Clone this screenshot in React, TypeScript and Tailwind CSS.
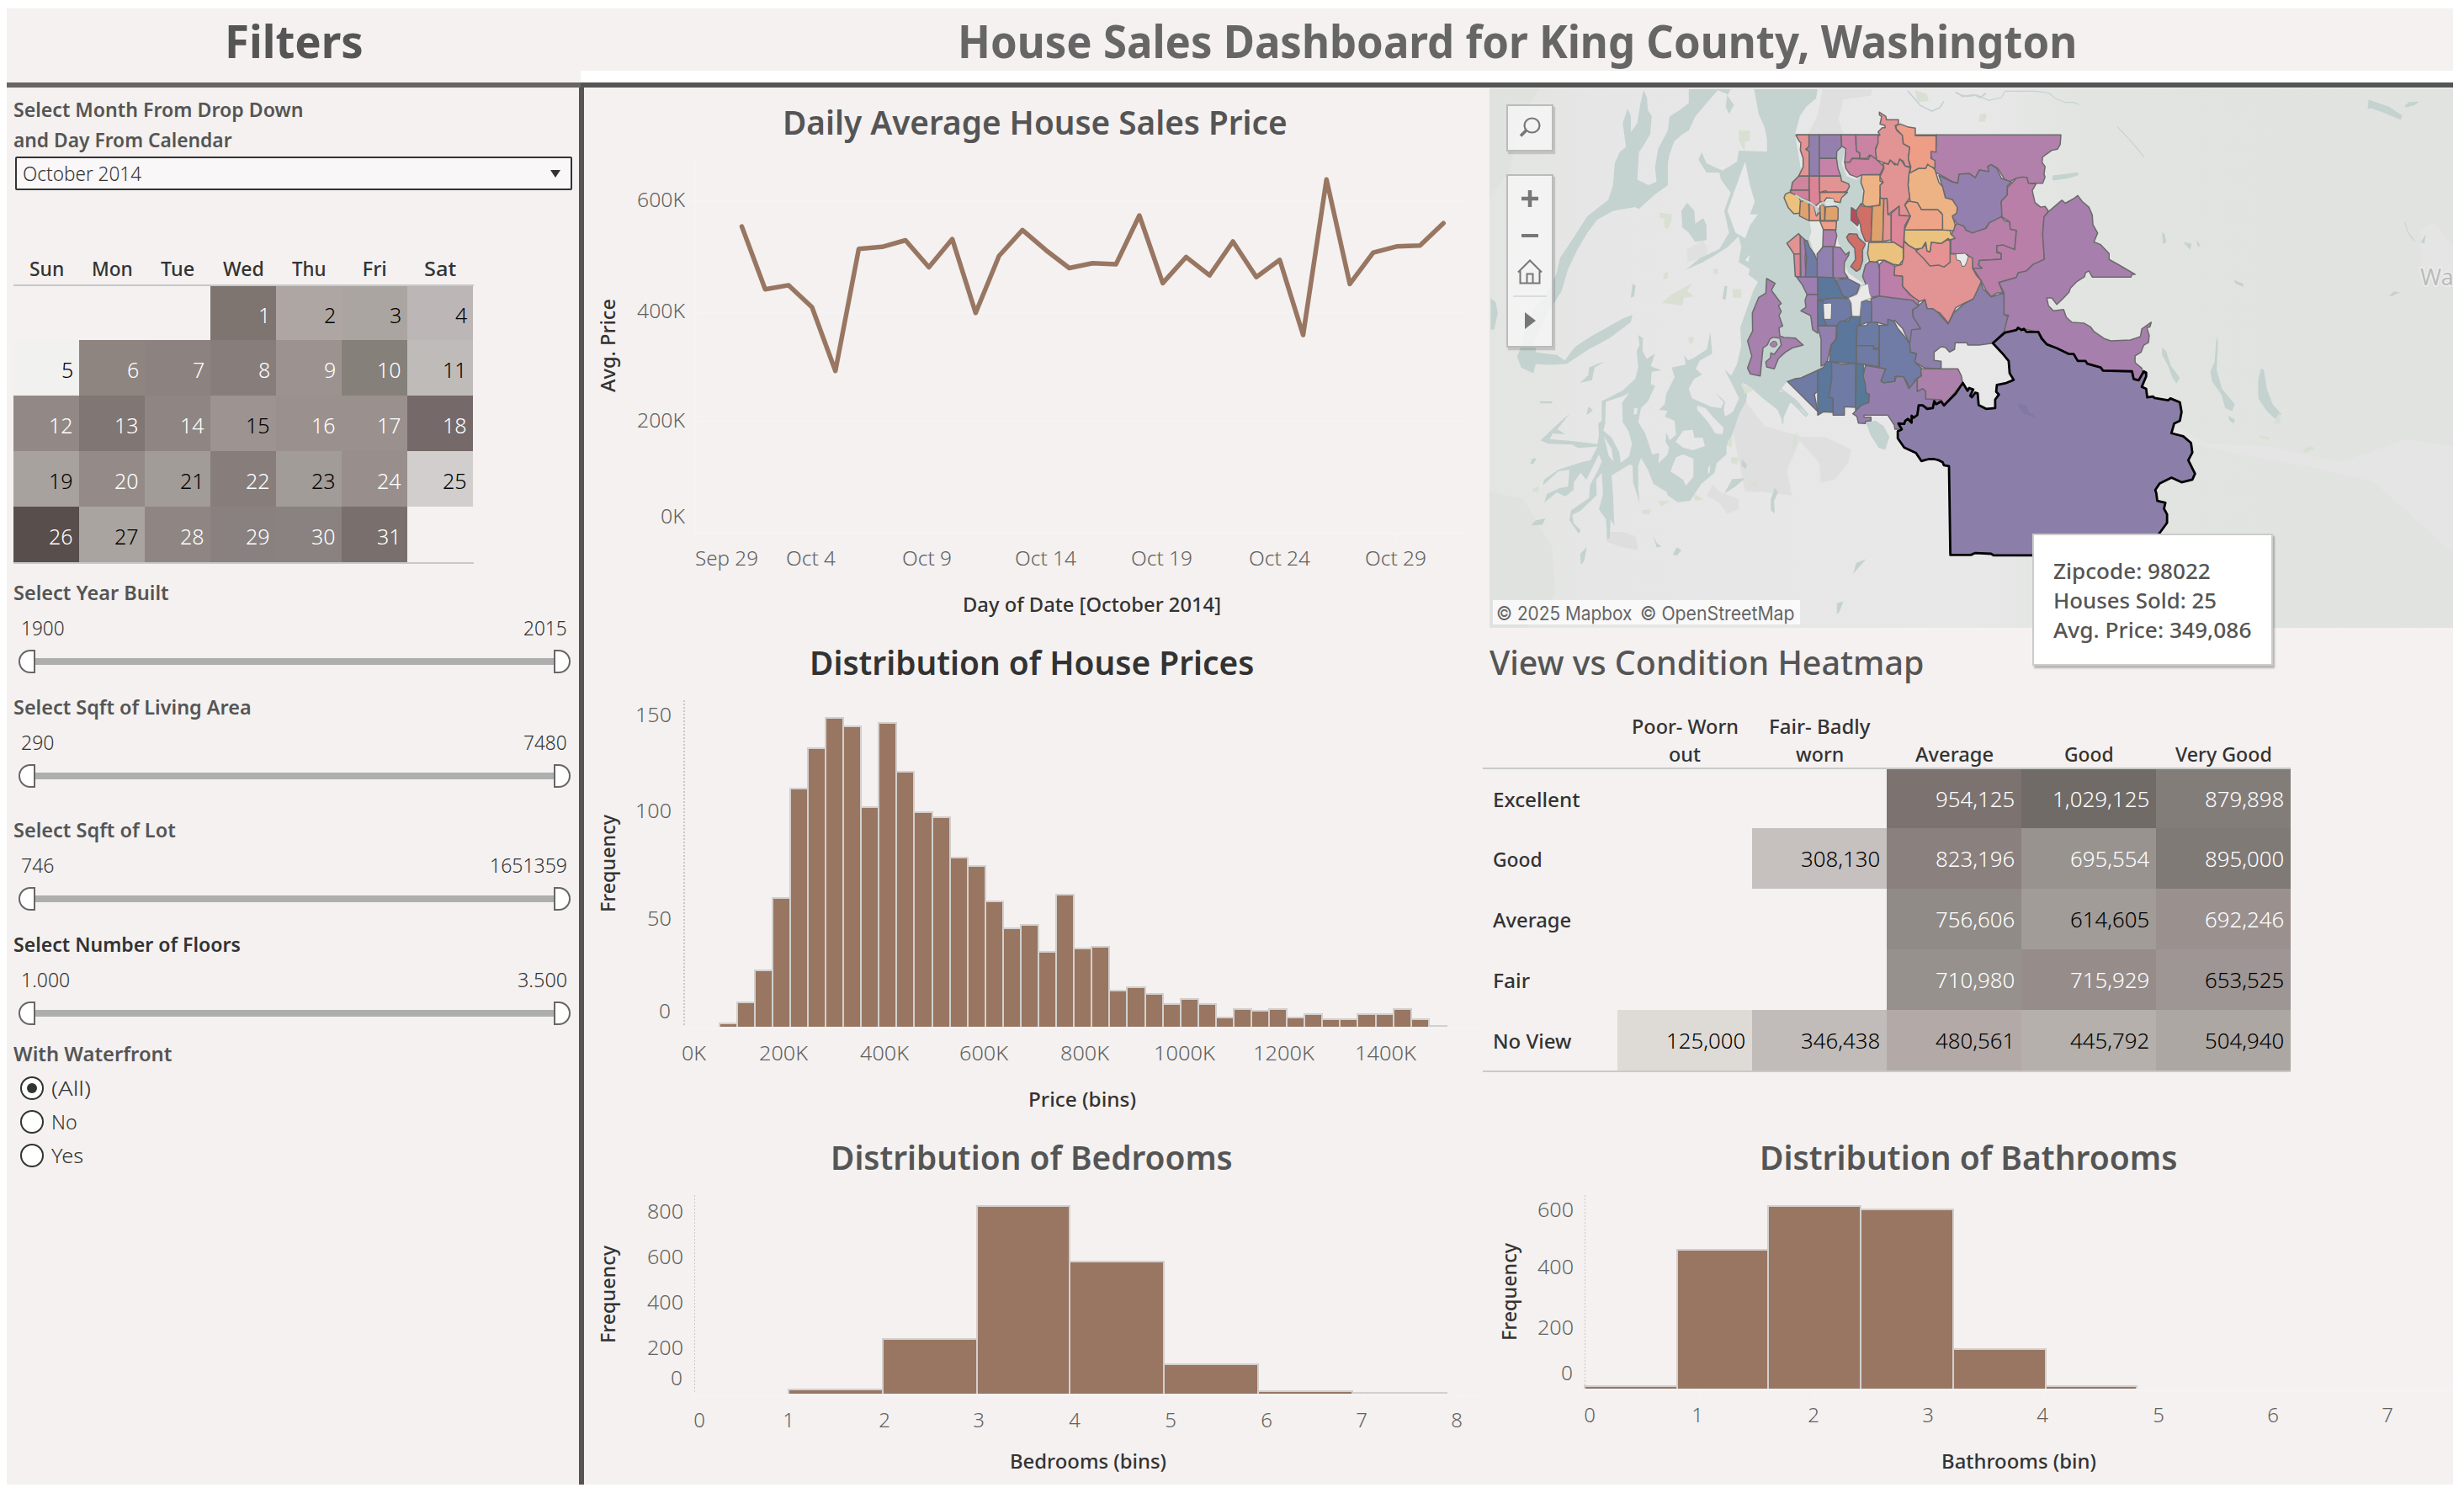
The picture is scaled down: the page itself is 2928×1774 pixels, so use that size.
import { useLayoutEffect, useRef, useState } from "react";
import type { ReactNode } from "react";

/** Single line of text fitted horizontally to a fixed width. */
function Fit({ w, className = "", children }: { w: number; className?: string; children: ReactNode }) {
  const ref = useRef<HTMLSpanElement>(null);
  const [k, setK] = useState(1);
  useLayoutEffect(() => {
    if (ref.current) setK(w / ref.current.offsetWidth);
  }, [w]);
  return (
    <span className={`block shrink-0 ${className}`} style={{ width: w }}>
      <span ref={ref} className="inline-block origin-left whitespace-pre" style={{ transform: `scaleX(${k})` }}>
        {children}
      </span>
    </span>
  );
}

/* ------------------------------------------------------------------ */
/* Chart text helpers                                                   */
/* ------------------------------------------------------------------ */

function Tick({ x, y, w, children }: { x: number; y: number; w: number; children: string }) {
  return (
    <text x={x} y={y} textLength={w} lengthAdjust="spacingAndGlyphs" className="fill-[#616161] text-[24px] font-[350]">
      {children}
    </text>
  );
}

function Digit({ x, y, children }: { x: number; y: number; children: number }) {
  return (
    <text x={x} y={y} textAnchor="middle" className="fill-[#616161] text-[24px] font-[350]">
      {children}
    </text>
  );
}

function AxisTitle({ x, y, w, children }: { x: number; y: number; w: number; children: string }) {
  return (
    <text x={x} y={y} textLength={w} lengthAdjust="spacingAndGlyphs" className="fill-[#333] text-[23px] font-medium">
      {children}
    </text>
  );
}

function SideTitle({ x, y, w, children }: { x: number; y: number; w: number; children: string }) {
  return (
    <text
      transform={`translate(${x} ${y}) rotate(-90)`}
      textLength={w}
      lengthAdjust="spacingAndGlyphs"
      className="fill-[#333] text-[24px] font-medium"
    >
      {children}
    </text>
  );
}

function Bars({ edges, tops, base }: { edges: number[]; tops: number[]; base: number }) {
  return (
    <g shapeRendering="crispEdges">
      {tops.map((t, i) => {
        const x0 = Math.round(edges[i]);
        const x1 = Math.round(edges[i + 1]);
        const top = Math.round(t);
        return (
          <g key={i}>
            <rect x={x0} y={top} width={x1 - x0 + 2} height={base - top} className="fill-[#d2d0cf]" />
            <rect x={x0 + 2} y={top + 2} width={x1 - x0 - 2} height={Math.max(0, base - top - 2)} className="fill-[#987662]" />
          </g>
        );
      })}
    </g>
  );
}

function PanelTitle({ w, className, children }: { w: number; className: string; children: string }) {
  return (
    <h2 className={`flex items-center text-[40px] leading-none ${className}`}>
      <Fit w={w}>{children}</Fit>
    </h2>
  );
}

/* ------------------------------------------------------------------ */
/* Filters                                                              */
/* ------------------------------------------------------------------ */

const DAYS: [string, number][] = [["Sun", 41], ["Mon", 49], ["Tue", 40], ["Wed", 49], ["Thu", 41], ["Fri", 29], ["Sat", 38]];

type Cell = [number, string, boolean] | null;
const WEEKS: Cell[][] = [
  [null, null, null, [1, "#7e7470", false], [2, "#aea6a3", true], [3, "#aaa5a1", true], [4, "#bcb7b6", true]],
  [[5, "#f1f1f0", true], [6, "#8e8581", false], [7, "#8c8380", false], [8, "#877e7c", false], [9, "#9c9391", false], [10, "#85807a", false], [11, "#bfbbb9", true]],
  [[12, "#928986", false], [13, "#807673", false], [14, "#8f8683", false], [15, "#9d9491", true], [16, "#9a918e", false], [17, "#9a918e", false], [18, "#756a69", false]],
  [[19, "#a7a29e", true], [20, "#948b88", false], [21, "#a19c98", true], [22, "#877e7b", false], [23, "#a19c98", true], [24, "#988f8c", false], [25, "#d2cecd", true]],
  [[26, "#584e4c", false], [27, "#a9a4a0", true], [28, "#8f8683", false], [29, "#898180", false], [30, "#8a8280", false], [31, "#79706d", false], null],
];

function Calendar() {
  return (
    <div className="ml-2 w-[547px] border-b-2 border-[#c8c8c8]">
      <div className="flex h-[42px] border-b-2 border-[#c8c8c8] text-[24px] font-medium leading-[41px] text-[#333]">
        {DAYS.map(([d, w]) => (
          <div key={d} className="flex w-[78px] justify-center">
            <Fit w={w}>{d}</Fit>
          </div>
        ))}
      </div>
      {WEEKS.map((week, r) => (
        <div key={r} className={r === 0 ? "flex h-16" : "flex h-[66px]"}>
          {week.map((c, i) => (
            <div
              key={i}
              className={`flex w-[78px] items-center justify-end pr-[7px] pt-[5px] text-[25px] font-[350] ${c && c[2] ? "text-black" : "text-white"}`}
              style={{ backgroundColor: c ? c[1] : undefined }}
            >
              {c && <Fit w={c[0] > 9 ? 29 : 14}>{c[0]}</Fit>}
            </div>
          ))}
        </div>
      ))}
    </div>
  );
}

function Range({ label, lw, lo, low, hi, hiw, className = "" }: {
  label: string; lw: number; lo: string; low: number; hi: string; hiw: number; className?: string;
}) {
  return (
    <div className={`flex flex-col ${className}`}>
      <Fit w={lw} className="ml-2 text-[23.5px] font-semibold leading-9">{label}</Fit>
      <div className="mt-2 flex h-8 justify-between pl-[17px] pr-[14px] text-[23px] font-[350] leading-8 text-[#333]">
        <Fit w={low}>{lo}</Fit>
        <Fit w={hiw}>{hi}</Fit>
      </div>
      <div className="ml-[14px] mt-2.5 flex h-7 w-[656px] items-center">
        <div className="h-7 w-5 rounded-l-[14px] border-2 border-[#666] bg-white" />
        <div className="h-2 flex-1 bg-[#aeaeae]" />
        <div className="h-7 w-5 rounded-r-[14px] border-2 border-[#666] bg-white" />
      </div>
    </div>
  );
}

function Radio({ label, w, on = false }: { label: string; w: number; on?: boolean }) {
  return (
    <div className="flex h-10 items-center gap-[9px] pl-4 text-[24px] font-[350] text-[#333]">
      <span className="flex size-7 items-center justify-center rounded-full border-2 border-[#333] bg-white">
        {on && <span className="size-3 rounded-full bg-[#333]" />}
      </span>
      <Fit w={w}>{label}</Fit>
    </div>
  );
}

function Filters() {
  return (
    <aside className="flex w-[680px] shrink-0 flex-col text-[#555]">
      <div className="ml-2 mt-2 text-[24px] font-semibold leading-9">
        <Fit w={344}>Select Month From Drop Down</Fit>
        <Fit w={260}>and Day From Calendar</Fit>
      </div>
      <div className="ml-[10px] mt-0.5 flex h-10 w-[662px] items-center justify-between rounded-xs border-2 border-[#333] bg-[#f9f7f8] pl-[7px] pr-[12px] text-[23px] font-[350] text-[#333]">
        <Fit w={141}>October 2014</Fit>
        <svg viewBox="0 0 12 9" className="h-[9px] w-3"><path d="M0 0h12L6 9z" fill="#333" /></svg>
      </div>
      <div className="h-[72px]" />
      <Calendar />
      <Range label="Select Year Built" lw={185} lo="1900" low={52} hi="2015" hiw={52} className="mt-4" />
      <Range label="Select Sqft of Living Area" lw={283} lo="290" low={39} hi="7480" hiw={52} className="mt-[22px]" />
      <Range label="Select Sqft of Lot" lw={193} lo="746" low={39} hi="1651359" hiw={92} className="mt-8" />
      <Range label="Select Number of Floors" lw={270} lo="1.000" low={58} hi="3.500" hiw={59} className="mt-[22px] text-[#333]" />
      <Fit w={188} className="ml-2 mt-4 text-[23.5px] font-semibold leading-9">With Waterfront</Fit>
      <div className="mt-[3px]">
        <Radio label="(All)" w={47} on />
        <Radio label="No" w={31} />
        <Radio label="Yes" w={38} />
      </div>
    </aside>
  );
}

/* ------------------------------------------------------------------ */
/* Charts                                                               */
/* ------------------------------------------------------------------ */

const DAILY = [553, 707, 697, 751, 907, 608, 603, 587, 653, 584, 765, 625, 562, 611, 655, 643, 646, 526, 692, 628, 673, 590, 677, 635, 819, 438, 694, 617, 602, 600, 545];

function LineChart() {
  const pts = DAILY.map((v, i) => `${(881.5 + i * 27.79).toFixed(1)},${(v / 2.063 + 1).toFixed(1)}`).join(" ");
  return (
    <svg viewBox="694 185 1068 559" className="block h-[559px] w-[1068px]">
      <path d="M826.500 190V641M818 238.500H1742M818 371H1742M818 501H1742M818 633H1742M964.500 633v8M1103.500 633v8M1242.500 633v8M1381.500 633v8M1520.500 633v8M1659 633v8" fill="none" stroke="#f3f4f3" strokeWidth="2" />
      <Tick x={757} y={246} w={57}>600K</Tick>
      <Tick x={757} y={378} w={57}>400K</Tick>
      <Tick x={757} y={507.500} w={57}>200K</Tick>
      <Tick x={785} y={622} w={29}>0K</Tick>
      <Tick x={826} y={672} w={75}>Sep 29</Tick>
      <Tick x={934} y={672} w={59}>Oct 4</Tick>
      <Tick x={1072} y={672} w={59}>Oct 9</Tick>
      <Tick x={1206} y={672} w={73}>Oct 14</Tick>
      <Tick x={1344} y={672} w={73}>Oct 19</Tick>
      <Tick x={1484} y={672} w={73}>Oct 24</Tick>
      <Tick x={1622} y={672} w={73}>Oct 29</Tick>
      <AxisTitle x={1144} y={727} w={307}>Day of Date [October 2014]</AxisTitle>
      <SideTitle x={731} y={466} w={111}>Avg. Price</SideTitle>
      <polyline points={pts} fill="none" stroke="#987662" strokeWidth="5.500" strokeLinejoin="round" strokeLinecap="round" />
    </svg>
  );
}

const PRICE_TOPS = [1240, 1177, 1077, 852, 512, 387, 293, 320, 570, 309, 460, 585, 601, 727, 753, 862, 946, 936, 1019, 841, 1009, 1004, 1139, 1129, 1150, 1181, 1166, 1181, 1223, 1197, 1203, 1197, 1223, 1213, 1228, 1228, 1213, 1213, 1197, 1228, 1249];

function PriceHistogram() {
  return (
    <svg viewBox="694 829 1068 501" className="block h-[501px] w-[1068px]">
      <path d="M812 1222H1762M812 1222v8M930 1222v8M1050 1222v8M1169 1222v8M1288 1222v8M1408 1222v8M1527 1222v8M1646 1222v8" fill="none" stroke="#f3f4f3" strokeWidth="2" />
      <path d="M813 832V1220" stroke="#cbc7c6" strokeWidth="2" strokeDasharray="2 2" />
      <Bars edges={PRICE_TOPS.map((_, i) => 853.6 + i * 21.08).concat(1718)} tops={PRICE_TOPS.map((t) => 740 + t / 2.613)} base={1220} />
      <Tick x={755} y={858} w={43}>150</Tick>
      <Tick x={755} y={972} w={43}>100</Tick>
      <Tick x={769} y={1100} w={29}>50</Tick>
      <Tick x={783} y={1210} w={14}>0</Tick>
      <Tick x={810} y={1260} w={29}>0K</Tick>
      <Tick x={902} y={1260} w={58}>200K</Tick>
      <Tick x={1022} y={1260} w={58}>400K</Tick>
      <Tick x={1140} y={1260} w={58}>600K</Tick>
      <Tick x={1260} y={1260} w={58}>800K</Tick>
      <Tick x={1371} y={1260} w={73}>1000K</Tick>
      <Tick x={1489} y={1260} w={73}>1200K</Tick>
      <Tick x={1610} y={1260} w={73}>1400K</Tick>
      <AxisTitle x={1222} y={1315} w={128}>Price (bins)</AxisTitle>
      <SideTitle x={731} y={1084} w={116}>Frequency</SideTitle>
    </svg>
  );
}

function BedroomHistogram() {
  return (
    <svg viewBox="694 1419 1068 345" className="block h-[345px] w-[1068px]">
      <path d="M820 1658H1762M825 1658v8M939 1658v8M1052 1658v8M1164 1658v8M1279 1658v8M1392 1658v8M1507 1658v8M1621 1658v8M1733 1658v8" fill="none" stroke="#f3f4f3" strokeWidth="2" />
      <path d="M825.500 1420V1656" stroke="#cbc7c6" strokeWidth="1" strokeDasharray="2 2" />
      <Bars edges={[936, 1048, 1160, 1270, 1382, 1494, 1606, 1718]} tops={[1650, 1590, 1432, 1498, 1620, 1652, 1654]} base={1656} />
      <Tick x={769} y={1448} w={43}>800</Tick>
      <Tick x={769} y={1502} w={43}>600</Tick>
      <Tick x={769} y={1556} w={43}>400</Tick>
      <Tick x={769} y={1610} w={43}>200</Tick>
      <Tick x={797} y={1646} w={14}>0</Tick>
      {[831, 937, 1051, 1163, 1277, 1391, 1505, 1618, 1731].map((x, i) => (
        <Digit key={i} x={x} y={1696}>{i}</Digit>
      ))}
      <AxisTitle x={1200} y={1745} w={186}>Bedrooms (bins)</AxisTitle>
      <SideTitle x={731} y={1596} w={116}>Frequency</SideTitle>
    </svg>
  );
}

function BathroomHistogram() {
  return (
    <svg viewBox="1762 1419 1153 345" className="block h-[345px] w-[1153px]">
      <path d="M1884 1652H2915M1884 1652v8M2019 1652v8M2156 1652v8M2293 1652v8M2429 1652v8M2567 1652v8M2703 1652v8M2839 1652v8" fill="none" stroke="#f3f4f3" strokeWidth="2" />
      <path d="M1883.500 1420V1650" stroke="#cbc7c6" strokeWidth="1" strokeDasharray="2 2" />
      <Bars edges={[1882, 1992, 2100, 2210, 2320, 2430, 2538]} tops={[1646, 1484, 1432, 1436, 1602, 1646]} base={1650} />
      <Tick x={1827} y={1446} w={43}>600</Tick>
      <Tick x={1827} y={1514} w={43}>400</Tick>
      <Tick x={1827} y={1586} w={43}>200</Tick>
      <Tick x={1855} y={1640} w={14}>0</Tick>
      {[1889, 2017, 2155, 2291, 2427, 2565, 2701, 2837].map((x, i) => (
        <Digit key={i} x={x} y={1690}>{i}</Digit>
      ))}
      <AxisTitle x={2307} y={1745} w={184}>Bathrooms (bin)</AxisTitle>
      <SideTitle x={1802} y={1593} w={116}>Frequency</SideTitle>
    </svg>
  );
}

/* ------------------------------------------------------------------ */
/* Heatmap                                                              */
/* ------------------------------------------------------------------ */

type Heat = [string, string, boolean] | null;
const HEAT: { label: string; w: number; cells: Heat[] }[] = [
  { label: "Excellent", w: 103, cells: [null, null, ["954,125", "#7c7270", false], ["1,029,125", "#706b67", false], ["879,898", "#837d7a", false]] },
  { label: "Good", w: 59, cells: [null, ["308,130", "#c6c1be", true], ["823,196", "#8a807e", false], ["695,554", "#98938f", false], ["895,000", "#807a76", false]] },
  { label: "Average", w: 93, cells: [null, null, ["756,606", "#908b86", false], ["614,605", "#a19c98", true], ["692,246", "#9a918f", false]] },
  { label: "Fair", w: 44, cells: [null, null, ["710,980", "#96918c", false], ["715,929", "#968d8a", false], ["653,525", "#9e9694", true]] },
  { label: "No View", w: 93, cells: [["125,000", "#dedad5", true], ["346,438", "#c1bcb9", true], ["480,561", "#b3aaa7", true], ["445,792", "#b5b0ac", true], ["504,940", "#aca7a3", true]] },
];

const HEAT_COLS: [string, number][][] = [
  [["Poor- Worn", 127], ["out", 38]],
  [["Fair- Badly", 120], ["worn", 57]],
  [["Average", 93]],
  [["Good", 59]],
  [["Very Good", 115]],
];

function Heatmap() {
  return (
    <div className="mb-14 w-[960px] border-b-2 border-[#c8cac8] text-[24px]">
      <div className="flex h-[87px] items-end border-b-2 border-[#c8cac8] pl-40 font-medium leading-[33px] text-[#333]">
        {HEAT_COLS.map((lines, i) => (
          <div key={i} className="flex w-40 flex-col items-center">
            {lines.map(([t, w]) => <Fit key={t} w={w}>{t}</Fit>)}
          </div>
        ))}
      </div>
      {HEAT.map((row, r) => (
        <div key={row.label} className={r === 0 ? "flex h-[70px]" : "flex h-[72px]"}>
          <div className="flex w-40 items-center pl-[12px] pt-px font-medium text-[#333]">
            <Fit w={row.w}>{row.label}</Fit>
          </div>
          {row.cells.map((c, i) => (
            <div
              key={i}
              className={`flex w-40 items-center justify-end pr-[8px] pt-0.5 text-[25px] font-[350] ${c && c[2] ? "text-black" : "text-white"}`}
              style={{ backgroundColor: c ? c[1] : undefined }}
            >
              {c && <Fit w={c[0].length > 7 ? 115 : 94}>{c[0]}</Fit>}
            </div>
          ))}
        </div>
      ))}
    </div>
  );
}

/* ------------------------------------------------------------------ */
/* Map                                                                  */
/* ------------------------------------------------------------------ */

const PINK = "#e29393", MAG = "#c983a6", ROSE = "#bb7fa9", PLUM = "#ac80ae", PUR = "#8c7faa";
const IND = "#6f7ba4", BLUE = "#5b779b", ORG = "#eeb384", DORG = "#e0a26c", SAL = "#ee9d87", YEL = "#eac27d", RED = "#d06f66";

type Shape = [string, string];

const EAST: Shape[] = [
  ["#b180ab", "2,153 372,153 370,178 362,190 345,193 318,210 316,224 325,235 322,255 325,262 318,278 275,278 272,264 240,265 218,275 205,268 185,240 165,230 155,235 158,248 130,244 118,264 100,253 70,255 66,278 50,274 12,255 -2,250 -4,236 -14,205 -14,190 2,180"],
  ["#9480ae", "10,258 50,275 66,278 70,255 100,253 118,264 130,244 158,248 155,235 165,230 182,240 195,265 225,275 213,285 213,308 195,325 198,360 185,375 160,380 148,395 125,402 110,407 90,400 82,388 65,385 58,375 45,365 65,345 50,320 30,318 20,285"],
  ["#b87fa8", "55,390 65,383 85,390 90,400 110,407 125,402 150,395 160,380 195,365 205,375 220,378 222,397 240,400 235,450 200,438 182,440 182,458 195,460 195,475 130,478 128,490 138,498 110,498 110,480 98,478 95,463 45,460 45,420"],
  ["#b97fa8", "240,265 260,262 272,264 275,278 298,280 287,297 295,328 312,340 325,338 335,350 322,365 318,410 323,475 290,488 270,505 245,510 240,522 205,530 188,535 200,562 182,562 165,572 150,555 135,530 120,510 110,498 138,498 128,490 130,478 195,475 195,460 182,455 182,440 200,438 235,450 240,400 222,397 220,378 197,365 195,325 213,308 213,290"],
  ["#a77fac", "335,352 375,322 385,330 410,318 422,310 435,325 455,340 465,360 467,385 481,407 470,430 490,437 515,460 515,475 545,490 592,514 583,514 580,521 465,521 455,505 445,510 442,520 420,532 400,550 396,560 380,575 360,592 345,575 330,575 335,595 350,608 380,605 388,625 405,638 440,640 460,650 470,662 500,680 520,686 578,684 608,675 612,655 640,638 636,650 627,652 634,672 632,690 618,697 610,715 592,725 592,742 612,757 615,768 600,788 588,785 583,765 497,763 450,745 420,735 395,720 330,695 305,663 262,655 205,665 205,640 217,620 203,618 203,562 188,535 240,522 245,510 270,505 290,488 323,475 318,410 322,365"],
];

const NORTH: Shape[] = [
  [PINK, "636,500 655,515 680,530 802,495 802,545 855,545 882,560 882,596 895,620 912,640 910,681 894,702 850,722 822,737 796,792 765,755 740,745 720,740 712,708 688,716 660,690 632,660 632,625 603,622 600,590 630,583 635,560"],
  ["#e69292", "680,535 690,528 712,515 715,505 720,535 730,538 735,503 770,508 795,492 802,500 802,575 780,592 762,585 730,588 708,562"],
  [YEL, "638,460 802,460 805,475 820,490 800,495 795,490 770,508 735,503 730,538 720,535 715,503 702,525 678,528 655,515 638,498"],
  [ORG, "655,257 690,240 715,240 722,225 735,232 748,245 762,290 775,305 785,345 810,352 828,380 825,400 810,410 820,440 815,462 775,460 775,425 772,400 758,388 700,388 685,362 660,360 652,300"],
  ["#eea587", "655,357 685,362 700,388 758,388 775,405 775,458 638,460 660,412 640,370"],
  [PINK, "562,220 582,225 590,210 605,228 625,207 642,232 660,238 655,262 652,300 658,345 640,370 660,410 620,408 620,375 580,405 577,350 552,345 552,300 563,290 552,270 566,240"],
  [MAG, "413,121 466,121 466,155 470,180 480,185 480,205 452,205 445,218 426,218 430,170 415,160"],
  ["#c984a4", "466,121 549,121 545,150 536,170 540,205 522,205 515,193 505,205 480,205 480,185 468,178"],
  ["#cc82a0", "426,218 445,218 452,205 510,208 518,193 540,208 566,235 552,262 487,263 470,272 445,262 430,240"],
  [PINK, "550,40 573,55 575,67 618,67 618,82 606,88 612,105 632,122 635,152 658,165 653,205 660,235 642,232 635,215 622,207 615,228 600,220 588,210 582,225 560,218 540,210 536,175 545,150 545,125 552,122 545,110 560,95 570,95 570,88 552,82 558,55 550,50"],
  [SAL, "609,88 625,82 650,92 678,97 678,124 752,124 752,182 734,180 734,205 748,212 748,240 730,232 722,225 715,240 690,240 658,257 662,235 653,205 658,165 635,152 632,122 610,100"],
  [ORG, "487,263 552,263 552,285 563,290 552,300 552,345 550,372 500,378 490,365 495,320 484,290"],
  [RED, "485,365 490,375 524,378 520,500 500,500 485,465 482,440 468,410 468,388 475,380"],
  ["#b94b5e", "450,380 468,392 468,408 478,430 472,445 449,425"],
  [DORG, "525,375 552,372 552,347 566,347 562,500 520,500"],
  ["#e29590", "566,347 577,347 580,405 592,405 592,495 562,500"],
  ["#dd8698", "592,400 620,375 620,408 660,410 640,445 635,525 592,500"],
  [RED, "433,485 442,473 470,475 475,488 500,510 490,530 490,570 480,600 468,607 448,590 465,565 462,525 440,500"],
  [YEL, "512,505 600,503 635,525 635,565 620,585 598,582 570,568 548,568 535,575 515,572 508,545"],
  [ROSE, "550,583 565,568 595,582 605,590 602,622 632,625 632,660 660,692 690,712 686,742 668,740 668,715 550,698"],
  ["#a07fb2", "500,585 515,572 545,575 550,600 550,695 520,700 500,650 490,625"],
  [PINK, "252,121 299,121 299,165 288,172 300,180 300,268 262,268 278,235 278,205 268,175 270,150 262,140"],
  ["#9180ae", "299,121 336,121 336,268 300,268 300,180 288,172 299,162"],
  ["#9580ad", "336,121 413,121 415,163 398,180 397,205 336,205"],
  ["#c583a9", "336,205 397,205 402,240 412,268 336,268"],
  ["#cf859d", "262,268 299,268 299,318 235,318 240,290"],
  ["#dc8496", "300,268 336,268 338,360 325,373 305,368 300,350"],
  [PINK, "336,268 412,268 415,285 440,295 443,305 435,320 425,325 365,325 358,320 336,326"],
  ["#d08098", "232,318 299,318 300,357 270,345 235,330"],
  [SAL, "338,326 436,325 415,345 410,362 388,358 385,348 362,345 350,362 338,358"],
  [YEL, "210,345 215,332 230,325 262,340 270,360 265,400 245,402 225,380"],
  [DORG, "268,360 285,352 298,362 300,427 265,410"],
  [SAL, "300,365 318,375 325,410 338,395 338,427 300,427"],
  [DORG, "338,375 350,365 355,380 355,427 340,425"],
  [DORG, "358,377 395,375 403,382 402,425 355,427"],
  [SAL, "338,428 397,428 395,460 350,458"],
  [PLUM, "350,460 393,460 398,480 390,520 348,518"],
  ["#9080b0", "328,545 350,518 385,520 385,630 328,628"],
  ["#9f80b0", "385,520 410,522 430,548 442,538 440,550 425,575 425,610 438,630 385,632"],
  [PINK, "220,507 262,473 268,480 268,545 245,545"],
  ["#d88898", "245,545 268,545 268,628 250,625"],
  [PLUM, "268,480 290,500 285,560 288,628 270,628"],
  [IND, "282,498 293,498 300,520 318,545 328,570 328,628 286,628 290,560"],
  ["#9c7fb0", "255,628 330,628 330,690 292,690 275,655"],
  [BLUE, "330,628 390,630 395,645 410,665 432,702 405,712 375,715 330,710"],
  [IND, "393,638 435,632 480,655 470,685 440,702 420,695 405,660"],
];

const SOUTH: Shape[] = [
  [PUR, "912,-43 920,-20 948,8 994,-6 994,71 1008,78 994,133 954,173 905,180 865,180 862,172 820,172 818,195 800,205 785,188 770,186 745,205 745,235 770,238 770,265 712,262 675,240 682,210 660,205 657,180 662,120 695,122 670,80 668,55 700,30 712,18 720,50 740,50 760,65 795,105 815,65 850,35 885,15"],
  ["#a07fae", "292,0 330,0 330,138 312,125 305,75 270,58 288,45 285,20"],
  [IND, "330,20 390,12 445,15 452,78 430,92 395,112 350,112"],
  [BLUE, "330,20 350,25 350,85 362,110 330,112"],
  ["#8f7fac", "520,15 550,5 600,12 668,20 690,40 668,55 670,80 697,122 665,125 658,175 632,120 605,92 580,110 540,98 522,98"],
  ["#6f7ba4", "482,30 500,20 522,27 522,98 505,100 480,110"],
  ["#917fae", "330,112 397,112 395,160 378,180 362,245 342,255 342,160"],
  [BLUE, "398,112 410,95 440,92 450,78 482,78 480,100 470,125 468,245 372,240 378,180 398,155"],
  ["#6b7ba3", "470,112 505,110 512,98 540,98 550,118 548,192 530,192 528,182 468,182"],
  [IND, "468,182 528,182 530,195 548,195 548,257 500,250 468,245"],
  ["#707ca6", "550,110 580,108 580,88 602,95 615,120 640,150 658,175 660,205 682,212 675,240 700,262 697,290 675,305 670,325 655,335 650,315 636,293 605,292 605,310 565,315 555,308 572,265 550,262"],
  [IND, "222,310 250,300 270,297 330,270 330,345 318,355 330,417"],
  [BLUE, "330,270 350,260 360,240 380,238 382,300 370,365 385,370 385,420 350,418 330,430"],
  [IND, "380,240 415,248 465,245 465,402 425,400 425,430 385,430 385,370 370,365 380,300"],
  ["#577998", "468,245 492,248 500,320 502,350 514,355 512,385 465,412"],
  ["#947fac", "500,253 572,265 555,308 565,315 605,310 610,292 636,293 655,335 685,300 685,345 705,335 715,345 715,372 770,375 740,405 690,395 685,430 640,460 618,480 605,480 603,465 580,430 495,430 495,437 520,437 520,450 500,452 500,460 475,458 470,435 455,425 485,395 512,385 514,355 502,350 500,320 492,290"],
  ["#ab80aa", "697,265 830,265 842,290 847,315 780,395 770,375 715,372 715,345 705,335 685,345 685,300 700,290"],
  ["#a780ae", "148,-57 178,-40 165,-15 200,32 190,40 200,60 192,75 205,112 192,118 195,148 210,153 250,155 278,180 240,190 215,205 190,228 175,265 148,258 145,240 162,225 163,208 175,213 200,180 195,155 172,152 160,158 150,180 135,190 125,290 90,283 80,262 95,220 80,165 98,130 97,65 120,10 145,-5"],
];

const SELECTED = "81,795 60,822 25,853 17,843 2,850 -4,842 -8,860 -25,862 -38,853 -50,853 -54,878 -65,885 -71,880 -71,898 -82,888 -90,893 -93,901 -110,900 -100,915 -112,920 -112,938 -93,962 -58,976 -42,997 -20,992 -4,992 10,995 21,1000 25,1008 40,1010 44,1240 105,1240 118,1235 165,1237 172,1241 640,1241 645,1205 665,1183 687,1157 687,1135 678,1120 682,1105 658,1100 655,1080 652,1072 665,1055 700,1040 730,1052 762,1045 770,1030 750,995 762,975 758,950 735,933 700,925 708,900 725,893 730,870 725,845 697,835 690,840 650,834 645,830 628,832 625,810 612,805 625,778 625,768 618,765 603,788 588,785 583,765 497,763 490,755 450,745 445,738 422,738 410,720 395,720 360,705 330,695 315,680 305,663 270,663 262,655 255,658 245,652 240,658 205,665 170,692 200,720 217,738 220,770 232,787 210,795 182,800 180,818 188,825 177,838 177,860 150,862 128,852 125,822 118,820 108,832 103,828 112,812 100,808 95,815";

const WATER = [
  "645,37 775,37 765,55 785,80 770,105 760,85 765,50 735,40 700,75 665,112 645,150 625,160 600,180 585,215 580,240 580,300 540,325 490,365 478,360 410,370 360,395 330,430 300,475 270,530 250,590 215,640 190,680 165,730 172,758 235,765 260,780 290,745 300,738 340,715 380,695 440,665 470,655 465,675 400,718 330,752 265,790 210,792 170,790 162,815 125,800 112,770 125,740 135,700 165,640 215,580 235,540 245,500 290,440 330,385 395,340 410,300 415,240 430,210 450,195 440,130 455,90 465,110 465,155 485,130 495,75 505,40 515,60 518,95 530,110 525,160 505,190 490,210 485,285 520,300 545,290 540,250 550,200 580,150 585,112 615,95 645,75",
  "848,37 1045,37 1040,62 1010,85 990,110 975,160 1020,400 1055,560 1060,800 1000,822 950,838 925,865 950,870 1015,925 960,895 935,945 920,915 870,880 840,856 812,840 825,872 800,850 775,825 795,790 808,740 805,690 845,590 860,565 830,545 835,530 800,510 808,470 800,440 765,470 720,495 690,510 635,532 680,500 740,475 770,430 755,370 775,320 745,285 740,265 700,265 675,230 685,210 700,240 750,260 795,235 800,205 888,208 888,175 880,140 862,105",
  "640,348 662,370 665,405 690,390 700,410 700,450 665,455 645,430 625,415 622,370",
  "1105,200 1118,193 1130,198 1120,240 1135,275 1165,285 1180,275 1190,355 1160,365 1150,400 1170,420 1195,460 1205,500 1190,520 1188,570 1140,540 1128,510 1135,490 1110,460 1100,410 1110,360 1070,345 1120,340 1140,310 1110,270 1100,240",
  "470,570 480,575 475,605 465,608",
  "30,610 45,620 52,650 40,695 30,695",
  "1195,950 1225,945 1250,960 1268,990 1255,1025 1235,1020 1210,985",
  "755,1145 780,1105 820,1103 790,1125",
  "900,1160 912,1130 922,1140 910,1165 912,1200 900,1190",
  "1155,1365 1165,1335 1195,1325 1175,1345",
  "310,1340 308,1310 328,1292 320,1330",
  "155,1232 170,1218 200,1213 190,1230",
  "1105,1475 1105,1445 1125,1440 1112,1470",
  "535,1260 545,1280 560,1290 545,1292",
  "595,1312 608,1292 622,1300 608,1315",
  "810,1050 825,1065 822,1078 808,1068",
];

const SOUTH_SOUND = [
  "697,165 704,240 660,265 645,295 668,315 640,330 620,365 632,400 700,430 735,435 745,415 715,380 750,412 745,440 750,465 778,448 800,400 765,330 748,298 770,318 800,330 828,385 825,410 800,455 775,530 755,570 755,600 720,630 712,665 665,705 625,765 580,770 545,745 520,650 545,600 550,575 538,555 540,522 552,550 575,530 570,480 535,465 545,445 515,440 535,420 540,385 570,325 560,290 610,280 603,245 618,265 640,255 685,225",
  "440,175 457,185 455,230 470,260 500,240 485,285 522,300 488,305 485,350 500,355 475,410 450,435 440,485 465,525 490,600 515,595 512,632 545,600 570,570 590,620 600,700 560,745 495,705 475,655 450,612 440,640 440,720 445,775 432,730 422,700 420,640 410,635 345,675 350,740 355,855 342,830 338,900 330,900 325,830 300,795 315,740 310,665 290,690 292,745 235,800 205,815 210,845 235,870 228,882 195,835 200,800 265,755 268,710 300,650 310,625 300,600 285,630 255,690 235,665 210,700 210,725 180,750 150,735 105,772 115,740 160,720 190,715 195,655 155,660 100,710 105,690 155,655 230,630 270,620 295,572 225,577 205,565 120,562 92,550 160,485 195,455 152,510 180,528 135,525 125,545 210,553 295,563 300,530 298,490 310,480 310,410 385,372 430,330 440,290 435,230 445,210",
  "318,270 285,290 275,335 232,345 262,318 265,290 300,275",
  "88,411 135,410 132,418 92,418",
  "262,430 278,440 270,450 256,458",
  "748,0 758,0 752,48 740,46",
  "55,632 62,615 78,614 66,634",
];

const SOUTH_ISLANDS = [
  "573,555 600,515 635,512 640,540 670,540 678,570 635,585 600,575",
  "555,660 575,610 600,600 637,615 637,680 610,712 600,690",
  "650,425 680,435 710,470 745,505 740,528 715,525 690,485 650,440",
  "325,412 385,392 408,380 383,415 385,485 405,515 418,560 408,607 378,630 372,590 345,540 316,515 322,490",
  "318,535 345,580 352,625 335,605",
  "425,436 438,434 436,455 424,458",
  "690,645 697,640 695,665 688,668",
];

const ISLANDS = [
  "785,320 820,235 835,300 850,345 835,380 860,380 835,410 820,445 790,430 765,370",
  "820,505 835,490 830,510",
];

const PARKS = [
  "800,150 835,150 835,178 820,180 818,205 808,190 800,175",
  "555,375 592,380 592,395 580,420 570,415 568,390 555,390",
  "562,622 590,600 655,568 640,590 660,605 630,608 625,630",
  "782,585 808,585 808,608 782,608",
  "568,545 580,535 580,555 565,558",
  "722,530 735,528 735,543 722,543",
  "645,715 662,718 655,735 645,730",
  "806,842 850,860 820,872",
  "965,1000 982,975 980,1010 970,1025",
  "765,1000 780,990 778,1018 768,1015",
  "775,1045 800,1045 795,1065 778,1062",
  "835,1110 858,1115 855,1128 838,1122",
  "550,1165 590,1165 560,1180",
  "660,1145 690,1160 665,1165",
  "160,1130 180,1125 178,1140 160,1140",
  "498,1190 528,1188 522,1202 500,1200",
  "1348,40 1385,50 1390,70 1355,72",
];

function Zones({ shapes }: { shapes: Shape[] }) {
  return (
    <>
      {shapes.map(([fill, points], i) => (
        <polygon key={i} points={points} fill={fill} stroke="#6a6a6a" strokeWidth="1.500" vectorEffect="non-scaling-stroke" strokeLinejoin="round" />
      ))}
    </>
  );
}

const LAND = "#e8e9e8";

function MapCanvas() {
  return (
    <svg viewBox="1770 105 1145 641" className="block h-[641px] w-[1145px]">
      <defs>
        <linearGradient id="ground" x1="0" x2="1" y1="0" y2="0">
          <stop offset="0" stopColor="#e3e5e2" />
          <stop offset="0.100" stopColor="#e5e6e5" />
          <stop offset="0.500" stopColor="#e8e8e8" />
          <stop offset="0.620" stopColor="#e1e4e1" />
          <stop offset="1" stopColor="#e1e3e0" />
        </linearGradient>
      </defs>
      <rect x="1770" y="105" width="1145" height="641" fill="url(#ground)" />
      <g transform="translate(1760 90) scale(0.38265 0.43367)">
        <polygon points="26,34 180,34 120,120 90,260 26,330" fill="#dfe2df" />
        <polygon points="26,1140 130,1160 220,1290 230,1420 140,1512 26,1512" fill="#dfe2df" />
        <polygon points="1060,37 1215,37 1210,55 1125,65 1110,120 1125,160 1015,160 1045,110" fill="#dfdfdf" />
        <polygon points="820,890 880,960 1000,990 1070,990 1150,1025 1140,1060 1100,1105 1055,1115 1050,1060 990,1000 950,1080 965,1150 870,1140 820,1140 790,1010 780,970" fill="#dfdfdf" />
        <polygon points="700,1150 720,1120 740,1140 800,1160 800,1188 765,1200 740,1170" fill="#dfdfdf" />
        <polygon points="390,1250 440,1250 480,1262 487,1300 430,1290 388,1275" fill="#dedede" />
        <polygon points="640,475 690,450 705,480 690,500 640,510" fill="#dfe0df" />
        {WATER.map((p, i) => <polygon key={i} points={p} fill="#c4d2d0" />)}
        {ISLANDS.map((p, i) => <polygon key={i} points={p} fill={LAND} />)}
        <path d="M1325 42l40 40 35 15 25-10 12-17M1475 45l20 12 35-5 20 8 18-12" fill="none" stroke="#c4d2d0" strokeWidth="4" />
      </g>
      <g transform="translate(1800 340) scale(0.33333)">
        {SOUTH_SOUND.map((p, i) => <polygon key={i} points={p} fill="#c4d2d0" />)}
        {SOUTH_ISLANDS.map((p, i) => <polygon key={i} points={p} fill="#e6e7e6" />)}
      </g>
      <g transform="translate(1760 90) scale(0.38265 0.43367)">
        {PARKS.map((p, i) => <polygon key={i} points={p} fill="#d9e0d3" />)}
      </g>
      <g transform="translate(2300 90) scale(0.40051 0.45918)">
        <polygon points="500,900 640,870 800,950 1000,960 1200,1000 1400,940 1540,960 1540,1240 1440,1160 1300,1050 1100,1010 900,980" fill="#e4e5e4" />
        <polygon points="1440,400 1480,380 1535,440 1535,520 1440,500" fill="#e5e5e5" />
        {[
          "1285,62 1305,68 1345,80 1385,103 1380,114 1330,96 1295,85 1282,85",
          "1392,78 1405,68 1435,67 1420,76 1395,82",
          "347,258 380,255 424,250 422,258 390,266 347,271",
          "672,703 684,712 698,750 725,782 715,796 703,782 690,750 672,722",
          "834,675 838,690 834,760 850,810 888,850 880,868 860,860 848,825 820,790 816,765 828,740",
          "965,758 974,760 983,810 1000,850 1025,875 1015,893 985,870 958,835 957,790",
          "672,405 680,410 685,432 675,435",
          "735,430 760,435 755,450",
          "775,425 786,440 778,442",
          "885,528 912,538 914,546 890,538",
          "1345,570 1360,558 1378,560 1355,570",
          "868,880 888,890 885,900 872,892",
          "1440,430 1455,410 1450,435",
        ].map((p, i) => <polygon key={i} points={p} fill="#c4d2d0" />)}
        <path d="M58 44l35 10 30-4 35 14 38-8 10-16 40 0 50 0 40 4 20 15 30 10 25 0 15 6M540 132l30 28 30 30 18 20M1392 378l10 28 20 22" fill="none" stroke="#c4d2d0" strokeWidth="2.500" />
        {["132,100 150,97 152,108 145,120 128,118", "960,930 990,936 988,943 962,938", "1090,968 1112,957 1126,964 1098,977", "1000,900 1020,872 1025,900"].map((p, i) => (
          <polygon key={i} points={p} fill="#d9e0d3" />
        ))}
        <Zones shapes={EAST} />
      </g>
      <g transform="translate(2050 120) scale(0.33333)">
        <polygon points="300,490 318,430 340,430 350,480 335,545 318,545" fill="#e6e8e6" />
        <path d="M252 121H756" stroke="#6a6a6a" strokeWidth="5" />
        <Zones shapes={NORTH} />
        <polygon points="822,545 855,543 867,555 862,572 855,588 845,590 838,570 825,566" fill={LAND} stroke="#6a6a6a" strokeWidth="3" />
        <path d="M250 335l25 15 30 14 18 14M338 370l12-8 10 12" fill="none" stroke="#c4d2d0" strokeWidth="7" />
        <path d="M316 375l10 35 10-30" fill="#c4d2d0" stroke="#6a6a6a" strokeWidth="2" />
        <polygon points="362,350 385,348 390,365 408,362 395,372 370,372" fill="#dce4e3" />
      </g>
      <g transform="translate(2050 350) scale(0.33333)">
        <Zones shapes={SOUTH} />
        <polygon points="350,32 375,30 380,35 378,88 352,88" fill={LAND} stroke="#6a6a6a" strokeWidth="3" />
        <polygon points="440,12 470,0 485,-32 510,-38 515,-5 522,12 485,25 480,77 453,76 450,30" fill={LAND} stroke="#8a8a8a" strokeWidth="2" />
        <path d="M160 178c5-15 25-15 25-2c0 14-22 14-25 2z" fill="#a780ae" stroke="#6a6a6a" strokeWidth="3" />
        <path d="M195 335l60 45 40 50M230 375l60 60M205 400l0 60" fill="none" stroke="#c4d2d0" strokeWidth="6" />
      </g>
      <g transform="translate(2300 90) scale(0.40051 0.45918)">
        <polygon points={SELECTED} fill="#8b7fa9" stroke="#000" strokeWidth="2.800" vectorEffect="non-scaling-stroke" strokeLinejoin="round" />
        <path d="M244 848l25 5 10 18 24 16-40-12-20-22z" fill="#8079a6" />
      </g>
      <text x="2876" y="339" stroke="#eee" strokeWidth="3" paintOrder="stroke" className="fill-[#bcbcbc] text-[27px]">Wa</text>
    </svg>
  );
}

function MapPanel() {
  return (
    <div className="relative ml-2 mt-px h-[641px] w-[1145px]">
      <MapCanvas />
      <div className="absolute left-[20px] top-[19px] flex flex-col gap-[27px]">
        <div className="flex h-[56px] w-[56px] items-center justify-center border-2 border-[#bbb] bg-[#f4f4f4]/90 shadow-[2px_3px_1px_rgba(0,0,0,0.14)]">
          <svg viewBox="0 0 28 28" className="size-7" fill="none" stroke="#777" strokeWidth="2.200">
            <ellipse cx="16.500" cy="11" rx="9" ry="8.500" />
            <path d="M9.500 17L3 23.500" strokeWidth="3.500" />
          </svg>
        </div>
        <div className="flex h-[206px] w-[56px] flex-col items-center border-2 border-[#bbb] bg-[#f4f4f4]/90 pt-[17px] shadow-[2px_3px_1px_rgba(0,0,0,0.14)]">
          <svg viewBox="0 0 20 20" className="size-5"><path d="M10 0v20M0 10h20" stroke="#777" strokeWidth="4.500" /></svg>
          <svg viewBox="0 0 20 20" className="mt-[24px] size-5"><path d="M0 10h20" stroke="#777" strokeWidth="4" /></svg>
          <svg viewBox="0 0 30 30" className="mt-[18px] size-[30px]" fill="none" stroke="#777" strokeWidth="2">
            <path d="M1 15.500L15 1.500L29 15.500M3.500 14v14.500h23V14M11.500 28.500V17.500h7v11" />
          </svg>
          <div className="mt-[13px] h-0.5 w-10 bg-[#dcdcdc]" />
          <svg viewBox="0 0 13 20" className="mt-[18px] h-5 w-[13px]"><path d="M0 0l13 10L0 20z" fill="#777" /></svg>
        </div>
      </div>
      <div className="absolute left-1 top-[608px] flex h-[29px] w-[365px] items-center justify-between bg-white/75 pl-1 pr-[6px] pt-0.5 font-[Inter,sans-serif] text-[22.5px] text-[#666]">
        <Fit w={161}>© 2025 Mapbox</Fit>
        <Fit w={184}>© OpenStreetMap</Fit>
      </div>
      <div className="absolute left-[645px] top-[529px] z-10 flex h-[157px] w-[286px] flex-col border-2 border-[#ccc] bg-white pl-[23px] pt-[25px] text-[25px] font-medium leading-[35px] text-[#555] shadow-[2px_3px_2px_rgba(0,0,0,0.25)]">
        <Fit w={187}>Zipcode: 98022</Fit>
        <Fit w={194}>Houses Sold: 25</Fit>
        <Fit w={235}>Avg. Price: 349,086</Fit>
      </div>
    </div>
  );
}

/* ------------------------------------------------------------------ */
/* Page                                                                 */
/* ------------------------------------------------------------------ */

export default function App() {
  return (
    <div className="h-[1774px] w-[2928px] overflow-hidden bg-white pl-2 pt-2.5 font-['Noto_Sans',sans-serif]">
      <div className="flex h-[1754px] w-[2907px] flex-col bg-[#f4f1f0]">
        <header className="flex h-[94px] shrink-0">
          <div className="flex w-[682px] justify-center border-b-6 border-[#666] text-[54px] font-bold leading-[77px] text-[#555]">
            <Fit w={165}>Filters</Fit>
          </div>
          <div className="flex w-[2225px] flex-col border-b-6 border-[#555] bg-white">
            <div className="flex h-[74px] justify-center bg-[#f4f1f0] text-[54px] font-bold leading-[76px] text-[#666]">
              <Fit w={1330}>House Sales Dashboard for King County, Washington</Fit>
            </div>
          </div>
        </header>
        <div className="flex min-h-0 flex-1">
          <Filters />
          <main className="flex flex-1 border-l-6 border-[#555]">
            <div className="flex w-[1068px] shrink-0 flex-col">
              <PanelTitle w={600} className="h-[81px] justify-center pl-1 font-semibold text-[#555]">Daily Average House Sales Price</PanelTitle>
              <LineChart />
              <PanelTitle w={528} className="h-[85px] justify-center pr-1 font-semibold text-[#333]">Distribution of House Prices</PanelTitle>
              <PriceHistogram />
              <PanelTitle w={478} className="h-[89px] justify-center pr-1 font-semibold text-[#555]">Distribution of Bedrooms</PanelTitle>
              <BedroomHistogram />
            </div>
            <div className="flex w-[1153px] shrink-0 flex-col">
              <MapPanel />
              <PanelTitle w={516} className="h-[81px] pl-[8px] font-medium text-[#555]">View vs Condition Heatmap</PanelTitle>
              <Heatmap />
              <PanelTitle w={496} className="h-[89px] justify-center font-semibold text-[#555]">Distribution of Bathrooms</PanelTitle>
              <BathroomHistogram />
            </div>
          </main>
        </div>
      </div>
    </div>
  );
}
